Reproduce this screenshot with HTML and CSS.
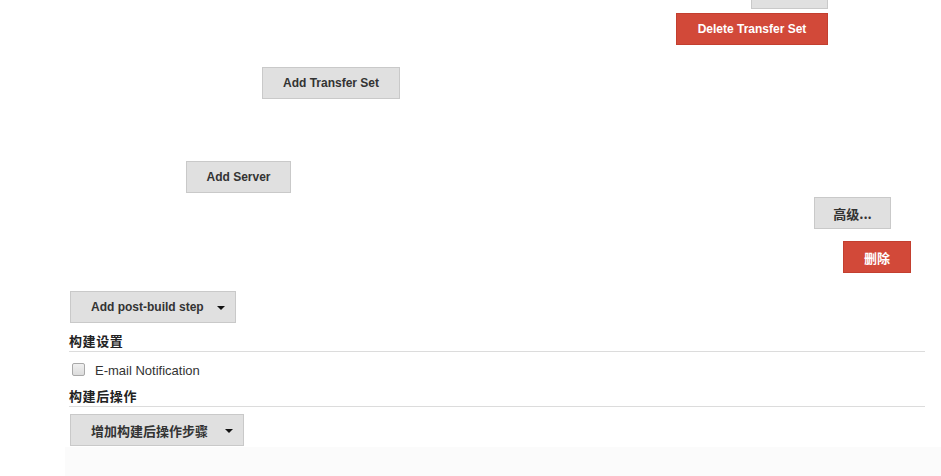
FILE: index.html
```html
<!DOCTYPE html>
<html>
<head>
<meta charset="utf-8">
<link rel="stylesheet" href="styles.css">
</head>
<body>
<div class="page">
  <div class="row r-stub"><span class="btn stub"></span></div>
  <div class="row r-del"><button class="btn red w-del">Delete Transfer Set</button></div>
  <div class="row r-ats"><button class="btn w-ats">Add Transfer Set</button></div>
  <div class="row r-srv"><button class="btn w-srv">Add Server</button></div>
  <div class="row r-adv"><button class="btn w-adv cjk">高级...</button></div>
  <div class="row r-rm"><button class="btn red w-rm cjk">删除</button></div>
  <div class="row r-pbs"><button class="btn drop w-pbs">Add post-build step<span class="caret"></span></button></div>
  <div class="section-head h1">构建设置</div>
  <div class="check-row"><span class="checkbox"></span><span class="check-label">E-mail Notification</span></div>
  <div class="section-head h2">构建后操作</div>
  <div class="row r-add"><button class="btn drop w-add cjk">增加构建后操作步骤<span class="caret"></span></button></div>
  <div class="footer-strip"></div>
</div>
</body>
</html>
```
FILE: styles.css
```css
html, body {
  margin: 0;
  padding: 0;
  background: #ffffff;
}
body {
  font-family: "Liberation Sans", Arial, "Noto Sans CJK SC", sans-serif;
  color: #333;
  overflow: hidden;
}
.page {
  width: 941px;
  height: 476px;
  display: flex;
  flex-direction: column;
}
.row {
  display: flex;
}
.btn {
  box-sizing: border-box;
  height: 32px;
  background: #e0e0e0;
  border: 1px solid #c9c9c9;
  border-radius: 0;
  font-family: "Liberation Sans", Arial, "Noto Sans CJK SC", sans-serif;
  font-weight: bold;
  font-size: 12px;
  color: #333;
  padding: 0;
  display: flex;
  align-items: center;
  justify-content: center;
}
.cjk {
  font-size: 13px;
  font-family: "Noto Sans CJK SC", "Liberation Sans", sans-serif;
}
.red {
  background: #d24939;
  border-color: #c33f2f;
  color: #fff;
}
.stub {
  width: 77px;
  height: 9px;
  border-top: none;
  margin-left: 751px;
}
.r-del { margin-top: 4px; }
.w-del { margin-left: 676px; width: 152px; }
.r-ats { margin-top: 22px; }
.w-ats { margin-left: 262px; width: 138px; }
.r-srv { margin-top: 62px; }
.w-srv { margin-left: 186px; width: 105px; }
.r-adv { margin-top: 4px; }
.w-adv { margin-left: 814px; width: 77px; }
.r-rm { margin-top: 12px; }
.w-rm { margin-left: 843px; width: 68px; }
.r-pbs { margin-top: 18px; }
.drop {
  justify-content: flex-start;
  padding-left: 20px;
  position: relative;
}
.w-pbs { margin-left: 70px; width: 166px; }
.caret {
  position: absolute;
  right: 10px;
  top: 14px;
  width: 0;
  height: 0;
  border-left: 4px solid transparent;
  border-right: 4px solid transparent;
  border-top: 4px solid #111;
}
.section-head {
  margin-left: 69px;
  width: 856px;
  height: 18px;
  line-height: 16px;
  border-bottom: 1px solid #dcdcdc;
  font-family: "Noto Sans CJK SC", "Liberation Sans", sans-serif;
  font-weight: bold;
  font-size: 13px;
  letter-spacing: 0.6px;
  color: #222;
}
.h1 { margin-top: 10px; }
.check-row {
  height: 36px;
  display: flex;
  align-items: center;
  padding-left: 72px;
  padding-top: 1px;
  box-sizing: border-box;
}
.checkbox {
  width: 11px;
  height: 11px;
  border: 1px solid #a9a9a9;
  border-radius: 2px;
  background: linear-gradient(#f0f0f0, #dcdcdc);
  margin-top: -3px;
}
.check-label {
  margin-left: 10px;
  font-size: 13px;
  color: #333;
}
.r-add { margin-top: 7px; }
.w-add { margin-left: 70px; width: 174px; }
.footer-strip {
  margin-top: 1px;
  flex: 1;
  margin-left: 65px;
  background: #fbfbfb;
}
```
